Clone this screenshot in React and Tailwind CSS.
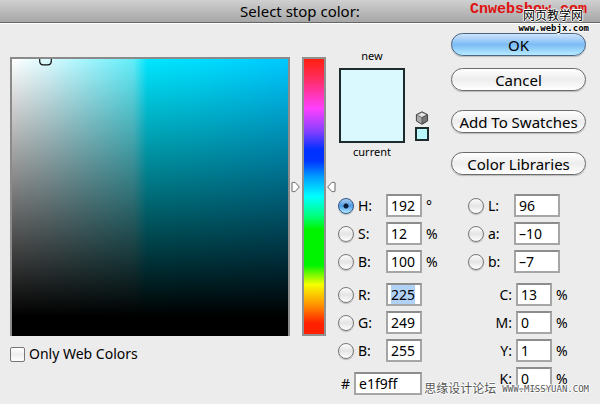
import { useEffect, useRef, useState } from "react";
import clsx from "clsx";

const hsbFields = [
  { id: "hue", label: "H:", value: "192", unit: "°" },
  { id: "saturation", label: "S:", value: "12", unit: "%" },
  { id: "brightness", label: "B:", value: "100", unit: "%" },
];

const rgbFields = [
  { id: "red", label: "R:", value: "225" },
  { id: "green", label: "G:", value: "249" },
  { id: "blue", label: "B:", value: "255" },
];

const labFields = [
  { id: "lightness", label: "L:", value: "96" },
  { id: "lab-a", label: "a:", value: "–10" },
  { id: "lab-b", label: "b:", value: "–7" },
];

const cmykFields = [
  { id: "cyan", label: "C:", value: "13" },
  { id: "magenta", label: "M:", value: "0" },
  { id: "yellow", label: "Y:", value: "1" },
  { id: "black", label: "K:", value: "0" },
];

function PushButton({ primary, children }) {
  return (
    <button
      type="button"
      className={clsx(
        "h-[23px] w-full rounded-full border text-[15px] leading-[20px] whitespace-nowrap shadow-[0_1px_1px_#bbb]",
        primary
          ? "border-[#4a6584] bg-linear-to-b from-[#cfe4fa] via-[#7cbcf5] to-[#b5eaff]"
          : "border-[#6b6b6b] bg-linear-to-b from-white via-[#ededed] to-white"
      )}
    >
      {children}
    </button>
  );
}

function TextField({ id, value, className, inputRef }) {
  const [text, setText] = useState(value);
  return (
    <input
      id={id}
      ref={inputRef}
      type="text"
      value={text}
      onChange={(e) => setText(e.target.value)}
      className={clsx(
        "h-[23px] border-2 border-[#a6a6a6] border-t-[#8c8c8c] bg-white px-[3px] leading-[18px] outline-none selection:bg-[#b0d2f7] selection:text-black",
        className
      )}
    />
  );
}

function RadioField({ field, checked, onSelect, wide, inputRef }) {
  return (
    <div className="flex h-[23px] items-center">
      <input
        type="radio"
        name="channel"
        aria-label={field.id}
        checked={checked}
        onChange={() => onSelect(field.id)}
        className="size-4 shrink-0 appearance-none rounded-full border border-[#777] bg-linear-to-b from-[#fdfdfd] via-[#e4e4e4] to-white shadow-[0_1px_1px_#bbb] checked:border-[#2e5688] checked:bg-[radial-gradient(circle,#0b1c38_0_2px,transparent_3px),linear-gradient(#a9ccf0,#4f9be6_50%,#b5ecff)]"
      />
      <label htmlFor={field.id} className={clsx("pl-1", wide ? "w-[30px]" : "w-8")}>
        {field.label}
      </label>
      <TextField id={field.id} value={field.value} inputRef={inputRef} className={wide ? "w-[46px]" : "w-9"} />
      {field.unit && <span className="pl-1">{field.unit}</span>}
    </div>
  );
}

function HueSlider() {
  const [hue, setHue] = useState(192);
  return (
    <div className="relative mx-3 h-[279px] w-6 shrink-0">
      <input
        type="range"
        aria-label="Hue"
        min="0"
        max="360"
        value={hue}
        onChange={(e) => setHue(Number(e.target.value))}
        className="block h-full w-full appearance-none border-2 border-[#909090] bg-[linear-gradient(#ff1f10,#ff2a50_6%,#ff40ff_18%,#8a3fff_26%,#0030ff_33%,#0034ff_37%,#00a0ff_43%,#00ffff_50%,#00ff80_57%,#00f400_62%,#00f400_75%,#f6ff00_82%,#ff8a00_90%,#ff2000_96%)] [direction:rtl] [writing-mode:vertical-lr] [&::-webkit-slider-thumb]:opacity-0"
      />
      <svg
        viewBox="0 0 9 11"
        className="pointer-events-none absolute -left-[11px] w-[9px] -translate-y-1/2"
        style={{ top: `${100 - (hue / 360) * 100}%` }}
      >
        <path d="M1 1.5Q1 .8 1.8.8H4L8.3 5.5 4 10.2H1.8Q1 10.2 1 9.5Z" fill="#fff" stroke="#555" strokeWidth="0.9" />
      </svg>
      <svg
        viewBox="0 0 9 11"
        className="pointer-events-none absolute -right-[10px] w-[9px] -translate-y-1/2"
        style={{ top: `${100 - (hue / 360) * 100}%` }}
      >
        <path d="M8 1.5Q8 .8 7.2.8H5L.7 5.5 5 10.2H7.2Q8 10.2 8 9.5Z" fill="#fff" stroke="#555" strokeWidth="0.9" />
      </svg>
    </div>
  );
}

function ColorField() {
  return (
    <div className="relative h-[279px] overflow-hidden border-2 border-b-0 border-[#8a8a8a] bg-[linear-gradient(transparent,#000_93%),linear-gradient(90deg,#fff,#d9faff_13%,#62eefa_44%,#00e6ff_49%,#00dcff_70%,#00c8ff)]">
      {/* Current colour marker, cut off by the top edge */}
      <svg viewBox="0 0 13 7" className="absolute top-0 left-[27px] w-[13px]">
        <path d="M.7 0V2.4Q1 5.9 4.2 5.9H8.8Q12 5.9 12.3 2.4V0" fill="none" stroke="#111" strokeWidth="1.2" />
      </svg>
    </div>
  );
}

function Preview() {
  return (
    <div className="flex w-[113px] pt-6 text-[11px] leading-4">
      <div className="ml-px w-[66px] text-center">
        <div>new</div>
        <div className="mt-1 h-[75px] border-2 border-[#1c2a2c] bg-[#d9f9ff]" />
        <div className="mt-px">current</div>
      </div>
      <div className="mt-[63px] ml-[10px] flex flex-col gap-[2px]">
        {/* Not a web safe colour */}
        <svg viewBox="0 0 14 14" className="size-[14px]">
          <path d="M7 .8 12.6 3.6V10L7 13.3 1.4 10V3.6Z" fill="#aaa" stroke="#444" />
          <path d="M7 1.2 12.2 3.8 7 6.6 1.8 3.8Z" fill="#e2e2e2" stroke="#555" strokeWidth="0.7" />
          <path d="M7 6.6 12.3 3.9V9.9L7 13Z" fill="#777" stroke="#444" strokeWidth="0.7" />
        </svg>
        <button type="button" aria-label="Nearest web color" className="size-[14px] border-2 border-[#1c2a2c] bg-[#b8f7fb]" />
      </div>
    </div>
  );
}

export default function App() {
  const [channel, setChannel] = useState("hue");
  const redRef = useRef(null);

  // The red value starts out selected, ready to be typed over
  useEffect(() => {
    redRef.current?.focus();
    redRef.current?.select();
  }, []);

  return (
    <div className="relative min-h-screen bg-[#ececec] font-['Noto_Sans','Noto_Sans_CJK_SC',sans-serif] text-[14px] leading-5 text-black">
      <header className="h-6 border-b border-white bg-linear-to-b from-[#d0d0d0] to-[#a5a5a5] text-center">
        <h1 className="h-[23px] border-b border-[#666] text-[15px] leading-[22px]">Select stop color:</h1>
      </header>

      <main className="flex pr-[14px] pb-[9px] pl-[10px]">
        <div className="min-w-0 flex-1 pt-[33px]">
          <ColorField />
          <label className="mt-2 flex items-center gap-1">
            <input
              type="checkbox"
              className="size-[15px] appearance-none rounded-[2px] border border-[#777] bg-linear-to-b from-white via-[#eee] to-white checked:bg-[#4f9be6]"
            />
            Only Web Colors
          </label>
        </div>

        <div className="pt-[33px]">
          <HueSlider />
        </div>

        <div className="w-[248px] shrink-0">
          <div className="flex">
            <Preview />
            <div className="flex flex-1 flex-col gap-[19px] pt-[9px]">
              <div className="flex flex-col gap-3">
                <PushButton primary>OK</PushButton>
                <PushButton>Cancel</PushButton>
              </div>
              <PushButton>Add To Swatches</PushButton>
              <PushButton>Color Libraries</PushButton>
            </div>
          </div>

          <div className="mt-[19px] flex">
            <div className="flex w-[130px] flex-col gap-[10px]">
              <div className="flex flex-col gap-[5px]">
                {hsbFields.map((field) => (
                  <RadioField key={field.id} field={field} checked={channel === field.id} onSelect={setChannel} />
                ))}
              </div>
              <div className="flex flex-col gap-[5px]">
                {rgbFields.map((field) => (
                  <RadioField
                    key={field.id}
                    field={field}
                    checked={channel === field.id}
                    onSelect={setChannel}
                    inputRef={field.id === "red" ? redRef : undefined}
                  />
                ))}
              </div>
              <div className="flex h-[23px] items-center">
                <label htmlFor="hex" className="w-4 pl-[3px]">#</label>
                <TextField id="hex" value="e1f9ff" className="w-[68px]" />
              </div>
            </div>

            <div className="flex flex-col gap-[10px]">
              <div className="flex flex-col gap-[5px]">
                {labFields.map((field) => (
                  <RadioField key={field.id} field={field} checked={channel === field.id} onSelect={setChannel} wide />
                ))}
              </div>
              <div className="flex flex-col gap-[5px]">
                {cmykFields.map((field) => (
                  <div key={field.id} className="flex h-[23px] items-center">
                    <label htmlFor={field.id} className="w-12 pr-1 text-right">{field.label}</label>
                    <TextField id={field.id} value={field.value} className="w-9" />
                    <span className="pl-1">%</span>
                  </div>
                ))}
              </div>
            </div>
          </div>
        </div>
      </main>

      {/* Site marks stamped over the dialog */}
      <div className="pointer-events-none absolute top-px right-[13px] font-['Liberation_Mono',monospace] text-[15px] leading-[18px] font-bold text-[#e01010]">
        Cnwebshow.com
      </div>
      <div className="pointer-events-none absolute top-[9px] right-[11px] text-right font-['DejaVu_Sans_Mono','Noto_Sans_CJK_SC',monospace] [text-shadow:1px_0_#fff,-1px_0_#fff,0_1px_#fff,0_-1px_#fff]">
        <div className="pr-[6px] text-[12px] leading-[14px]">网页教学网</div>
        <div className="text-[9px] leading-[10px] font-bold">www.webjx.com</div>
      </div>
      <div className="pointer-events-none absolute right-[11px] bottom-2 flex items-center gap-[6px] font-['DejaVu_Sans_Mono','Noto_Sans_CJK_SC',monospace] text-[#555] [text-shadow:1px_0_#fff,-1px_0_#fff,0_1px_#fff,0_-1px_#fff]">
        <span className="text-[12px] leading-[14px]">思缘设计论坛</span>
        <span className="text-[9px] leading-[14px]">WWW.MISSYUAN.COM</span>
      </div>
    </div>
  );
}
